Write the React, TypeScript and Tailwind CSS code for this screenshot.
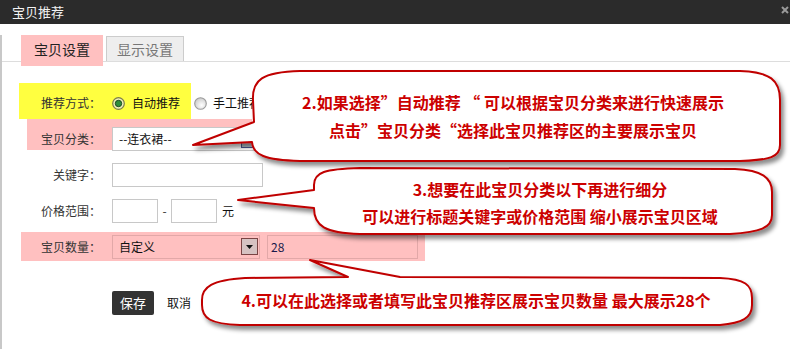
import React from 'react';

const RadioOn = () => (
  <svg width="13" height="13" viewBox="0 0 13 13" className="shrink-0">
    <circle cx="6.5" cy="6.5" r="5.8" fill="#eeeeb8" stroke="#7d7d4a" strokeWidth="1.2" />
    <circle cx="6.5" cy="6.5" r="3.2" fill="#2f8f3a" stroke="#1d4a22" strokeWidth="1" />
  </svg>
);

const RadioOff = () => (
  <svg width="13" height="13" viewBox="0 0 13 13" className="shrink-0">
    <defs>
      <radialGradient id="rg" cx="0.6" cy="0.65" r="0.7">
        <stop offset="0" stopColor="#ffffff" />
        <stop offset="1" stopColor="#c8c8c8" />
      </radialGradient>
    </defs>
    <circle cx="6.5" cy="6.5" r="5.8" fill="url(#rg)" stroke="#9a9a9a" strokeWidth="1.1" />
  </svg>
);

const Arrow = ({ className }: { className: string }) => (
  <span className={`flex items-center justify-center ${className}`}>
    <svg width="7" height="4" viewBox="0 0 7 4">
      <path d="M0 0 L7 0 L3.5 4 Z" fill="#111" />
    </svg>
  </span>
);

const Callouts: React.FC = () => (
  <svg className="absolute left-0 top-0 z-20 pointer-events-none" width="790" height="349" viewBox="0 0 790 349">
    <defs>
      <filter id="sh" x="-10%" y="-20%" width="130%" height="160%">
        <feDropShadow dx="3" dy="4" stdDeviation="2" floodColor="#000" floodOpacity="0.45" />
      </filter>
    </defs>
    <g fill="#fff" stroke="#c00000" strokeWidth="2" strokeLinejoin="round" filter="url(#sh)">
      {/* 2 */}
      <path d="M254 122 L253 100 C252 80 262 72 300 71 L740 71 C770 72 780 80 780 100 L780 145 C780 157 770 160 740 161 L300 161 C265 160 253 155 252 142 L193 145 Z" />
      {/* 3 */}
      <path d="M314 190 L314 185 C314 172 325 169 360 168 L735 169 C762 170 772 178 772 192 L772 215 C772 228 760 232 730 234 L360 234 C325 233 314 226 314 208 L238 200 Z" />
      {/* 4 */}
      <path d="M400 277 L720 278 C745 279 752 285 752 298 L752 305 C752 318 742 323 720 325 L240 325 C210 324 202 318 202 305 L202 300 C202 287 212 280 245 278 L348 277 L310 260 Z" />
    </g>
  </svg>
);

export default function App() {
  const label = 'w-[60px] shrink-0 text-right';
  return (
    <div className="relative w-[790px] h-[349px] overflow-hidden bg-white text-[12px] text-[#333] font-['Noto_Sans_CJK_SC',sans-serif]">
      {/* title bar */}
      <div className="h-[24px] bg-[#2b2b2b] flex justify-between pl-[12px] pr-[1px]">
        <span className="text-[13px] leading-[24px] text-[#f2f2f2]">宝贝推荐</span>
        <svg width="8" height="8" viewBox="0 0 8 8" className="mt-[6px]">
          <path d="M1 1 L7 7 M7 1 L1 7" stroke="#9a9a9a" strokeWidth="2" />
        </svg>
      </div>

      <div className="h-[325px] border-l-2 border-[#c8c8c8]">
        {/* tabs */}
        <div className="mt-[11px] h-[27px] flex items-start border-b border-[#ddd] pl-[19px]">
          <div className="relative z-10 w-[82px] h-[31px] bg-[#ffc0c0] flex justify-center pt-[4px] text-[14px] leading-[20px] text-[#222]">
            宝贝设置
          </div>
          <div className="ml-[3px] mt-[1px] w-[78px] h-[25px] bg-[#eeeeee] border border-b-0 border-[#cccccc] flex justify-center pt-[2px] text-[14px] leading-[20px] text-[#777]">
            显示设置
          </div>
        </div>

        {/* form */}
        <div className="mt-[21px]">
          <div className="h-[36px] flex items-center">
            <div className="ml-[17px] w-[172px] h-full bg-[#ffff40] flex items-center pl-[22px] pt-[4px]">
              <span className={label}>推荐方式：</span>
              <span className="ml-[11px]"><RadioOn /></span>
              <span className="ml-[7px] text-[#111]">自动推荐</span>
            </div>
            <div className="flex items-center pt-[4px]">
              <span className="ml-[3px]"><RadioOff /></span>
              <span className="ml-[6px] text-[#111]">手工推荐</span>
            </div>
          </div>

          <div className="ml-[25px] w-[225px] h-[31px] bg-[#ffc0c0] flex items-center pl-[14px] pt-[9px]">
            <span className={label}>宝贝分类：</span>
            <div className="ml-[11px] shrink-0 w-[147px] h-[24px] bg-white border border-[#c8c8c8] flex items-center justify-between pl-[6px] pr-[1px]">
              <span className="text-[#111]">--连衣裙--</span>
              <Arrow className="w-[16px] h-[18px] bg-[#b8c4cc] border border-[#4b5690]" />
            </div>
          </div>

          <div className="mt-[13px] h-[24px] flex items-center pl-[39px]">
            <span className={label}>关键字：</span>
            <div className="ml-[11px] w-[151px] h-[24px] border border-[#c8c8c8] bg-white" />
          </div>

          <div className="mt-[12px] h-[24px] flex items-center pl-[39px]">
            <span className={label}>价格范围：</span>
            <div className="ml-[11px] w-[46px] h-[24px] border border-[#c8c8c8] bg-white" />
            <span className="w-[13px] text-center">-</span>
            <div className="w-[46px] h-[24px] border border-[#c8c8c8] bg-white" />
            <span className="ml-[5px] text-[#111]">元</span>
          </div>

          <div className="mt-[9px] ml-[19px] w-[404px] h-[29px] bg-[#ffc0c0] flex items-center pl-[20px]">
            <span className={label}>宝贝数量：</span>
            <div className="ml-[11px] shrink-0 w-[148px] h-[24px] border border-[#e2a8a8] flex items-center justify-between pl-[6px] pr-[1px]">
              <span className="text-[#111]">自定义</span>
              <Arrow className="w-[17px] h-[17px] bg-[#d6c2c2] border border-[#7a4444]" />
            </div>
            <div className="ml-[7px] w-[151px] h-[24px] border border-[#e2a8a8] flex items-center pl-[3px] text-[#1a1a4a]">
              28
            </div>
          </div>

          <div className="mt-[30px] pl-[110px] flex items-center">
            <button className="w-[42px] h-[24px] rounded-[2px] bg-[#333] text-white text-[13px] leading-[24px]">保存</button>
            <span className="ml-[13px] text-[#111] text-[12px]">取消</span>
          </div>
        </div>
      </div>

      <Callouts />

      <div className="absolute z-30 left-[253px] top-[88px] w-[520px] text-center text-[16px] font-bold leading-[28px] text-[#cc0000]">
        <div>2.如果选择”自动推荐 “ 可以根据宝贝分类来进行快速展示</div>
        <div>点击”宝贝分类“选择此宝贝推荐区的主要展示宝贝</div>
      </div>
      <div className="absolute z-30 left-[310px] top-[176px] w-[460px] text-center text-[16px] font-bold leading-[27px] text-[#cc0000]">
        <div>3.想要在此宝贝分类以下再进行细分</div>
        <div>可以进行标题关键字或价格范围 缩小展示宝贝区域</div>
      </div>
      <div className="absolute z-30 left-[206px] top-[287px] w-[540px] text-center text-[16px] font-bold leading-[26px] text-[#cc0000]">
        4.可以在此选择或者填写此宝贝推荐区展示宝贝数量 最大展示28个
      </div>
    </div>
  );
}
